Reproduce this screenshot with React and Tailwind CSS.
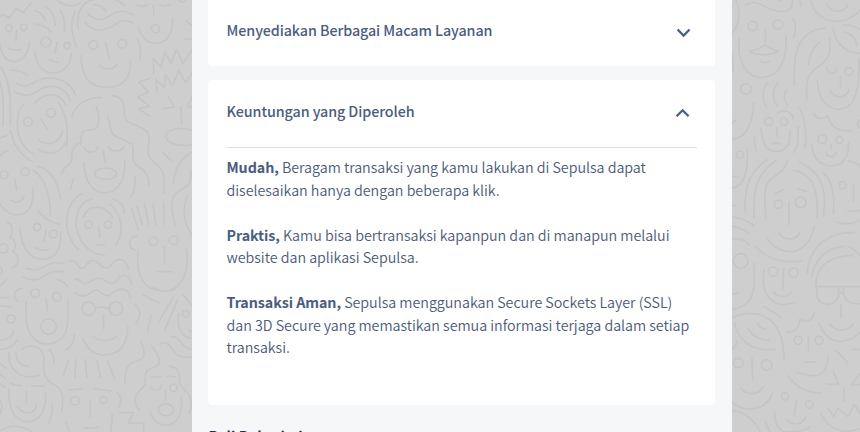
const leftTop = [
  'M0 50L8 43L28 54L48 25L70 38L93 8', 'M50 90L48 122', 'M0 135C6 165 20 185 42 185C68 184 86 160 88 128', 'M25 145Q42 152 61 149',
  'M103 32Q130 38 135 62', 'M137 20Q165 38 166 77', 'M103 73Q135 72 152 95', 'M180 30Q197 52 193 93', 'M171 126L166 157', 'M149 178Q160 187 175 187',
  'M105 158C107 198 132 220 163 219C193 218 214 190 214 160', 'M168 -4C185 18 220 24 240 8', 'M234 85C228 40 245 5 280 0', 'M225 36C208 65 216 115 232 143',
  'M280 14Q307 15 318 34', 'M340 -4Q362 5 374 18', 'M263 39C280 60 305 65 325 50S365 25 402 45', 'M255 67C272 90 295 96 325 85S360 48 400 70',
  'M317 129L328 176', 'M297 195C310 210 342 212 353 191', 'M243 167C244 230 270 262 320 262C370 262 392 235 391 185', 'M411 16Q427 24 441 15', 'M479 14Q492 21 509 14',
  'M460 17L462 48', 'M415 83C427 120 450 130 470 130C500 129 520 100 518 54', 'M412 116Q426 145 419 177', 'M559 62Q566 75 580 77', 'M555 116L578 118',
  'M461 220L460 176L483 201L494 156L513 191L530 148L549 190L576 150', 'M471 278L468 238L493 264L496 225L518 257L536 212L556 248L576 220',
  'M450 235L416 246L445 276L413 291L449 319L415 326L450 350', 'M490 326L523 321L504 290', 'M542 320L545 372', 'M576 290L563 320L580 321',
  'M32 210Q60 209 84 226', 'M50 249C65 263 80 261 100 249C145 222 205 230 228 287', 'M43 274C63 288 90 290 110 274C145 250 195 252 211 303', 'M105 308C137 276 174 274 197 314',
  'M-4 195C30 230 34 300 31 374', 'M-4 235C12 270 12 320 9 377', 'M-4 415L20 407', 'M32 393L43 432', 'M73 313C45 330 45 400 70 436', 'M175 306C200 345 206 390 200 436',
  'M123 358L142 387', 'M117 421C144 440 181 428 187 393', 'M215 351C225 315 260 291 304 293', 'M288 320C302 350 299 381 280 389C260 392 246 386 244 410L242 435',
  'M323 349C333 370 326 390 340 404C355 417 375 417 394 433', 'M336 287C365 288 376 310 373 345C373 373 405 368 437 391Q450 400 447 435', 'M497 410C500 380 570 380 580 397M497 410C505 432 530 434 545 435',
];
const leftMid = [
  'M0 36Q10 24 24 20', 'M43 -4Q66 39 98 54', 'M67 -2Q84 25 103 30', 'M117 17C145 34 180 30 196 -3', 'M45 107L50 138', 'M35 169C47 180 65 174 72 157', 'M-4 177C18 207 42 215 60 212C88 208 102 180 98 135',
  'M98 77C140 108 150 155 151 216', 'M115 67C150 75 175 115 181 163', 'M114 200Q141 235 179 240', 'M139 257L130 294', 'M103 311Q122 319 143 319', 'M60 253C64 320 95 346 130 345C165 344 184 320 182 264',
  'M21 235C43 240 38 270 30 281C50 288 50 312 39 323C59 334 59 364 35 372', 'M79 373C105 382 119 378 135 367C155 354 165 356 191 358', 'M69 399C100 414 117 407 133 396S160 380 191 383', 'M172 407Q190 411 204 428',
  'M221 102L211 137', 'M237 -3Q218 10 215 28C216 48 218 55 201 65Q188 73 186 90', 'M251 10C260 29 288 31 293 7', 'M324 9C335 25 364 24 372 9', 'M310 20L315 53', 'M252 57C254 110 275 147 315 147C353 146 377 110 374 48',
  'M396 -3C403 15 395 32 400 47C407 75 430 65 441 95Q448 108 447 125', 'M404 98Q410 131 394 157', 'M444 -3L445 32C451 52 480 65 489 87Q493 97 491 147', 'M488 25L514 50', 'M521 118C522 70 548 38 580 22', 'M510 -4Q540 9 577 2',
  'M245 149C198 172 178 257 235 317', 'M277 165C225 175 222 245 235 270C248 309 278 330 313 334', 'M249 222C265 175 320 182 338 221', 'M331 180C364 214 377 263 346 305', 'M340 165Q371 174 374 208', 'M296 249L300 282', 'M292 303L314 304',
  'M210 352C233 343 229 370 244 373C261 374 260 347 278 349C299 350 301 374 319 372C340 372 333 346 360 346Q377 347 386 373', 'M224 406C243 401 237 418 256 418C274 414 280 402 297 403C318 404 319 420 340 418C358 412 351 394 372 394Q393 396 395 422',
  'M394 193L415 257', 'M410 186L427 242', 'M434 180L446 242', 'M459 183L468 242', 'M491 178L492 241', 'M412 276C382 276 382 316 406 318', 'M493 307L494 360', 'M474 383L516 383', 'M414 322C406 390 430 432 470 438', 'M560 317C566 375 557 421 510 439',
  'M526 242C510 185 511 160 534 142C555 131 577 125 572 82', 'M562 155C545 200 549 238 580 279', 'M-4 430L20 407',
];
const leftLow = [
  'M0 30L25 28', 'M0 53L33 57', 'M0 156Q37 157 39 129', 'M-4 184Q36 185 51 157', 'M66 2C37 5 38 35 55 39', 'M138 33L143 68', 'M79 41C72 110 85 167 145 168C196 163 209 130 203 39', 'M224 140Q219 177 196 187',
  'M224 15C248 31 260 24 276 10C305 -5 295 27 328 22C347 7 357 0 373 5Q388 9 391 29', 'M286 61Q307 53 328 62', 'M311 81L311 122', 'M279 146C302 163 330 160 349 146', 'M248 151C264 190 287 201 314 201C354 201 382 176 384 115', 'M405 48Q432 77 408 105',
  'M429 20L477 46', 'M453 82L442 130', 'M520 28L475 103', 'M532 37L494 127', 'M549 20L580 57', 'M456 -2Q490 18 525 3', 'M536 77C530 125 547 150 580 151', 'M566 128L580 129', 'M515 147C544 143 540 184 580 184', 'M479 168C498 158 509 170 520 187C536 211 548 207 580 208',
  'M206 216L190 263', 'M228 215L225 267', 'M256 214L261 268', 'M291 219L302 270', 'M322 220L344 272', 'M148 185Q164 203 162 226', 'M65 184C92 163 132 176 132 214C127 258 137 278 164 291Q197 304 185 370', 'M27 193C22 245 65 279 116 262', 'M48 193Q47 231 85 235',
  'M0 226L18 241', 'M0 259L16 271', 'M0 288L15 297', 'M30 286Q47 294 64 293', 'M96 294L134 294', 'M79 310L79 341', 'M52 356C71 384 109 378 109 349', 'M26 303C25 365 45 401 82 401C122 400 139 365 136 317', 'M157 348Q158 386 145 405', 'M-3 330Q12 349 0 380', 'M-4 430Q43 400 94 430',
  'M207 306L246 302', 'M282 302L333 309', 'M270 338L271 387', 'M252 419Q274 423 294 417', 'M198 402L210 435', 'M336 378Q337 415 330 435', 'M352 315Q370 329 356 357', 'M358 374L400 374L386 405L431 405L430 435',
  'M423 161Q441 201 424 214C396 224 374 222 375 284', 'M455 175C476 200 489 229 464 237C429 248 437 261 436 282C437 301 411 306 404 331Q405 355 418 365', 'M507 235C533 234 539 253 539 282C541 310 590 310 568 376', 'M453 267L482 266', 'M502 265L527 267', 'M453 299C462 311 482 309 483 292', 'M496 303L497 337', 'M451 373C460 401 478 412 499 412C530 409 548 381 544 326',
];
const leftCircles = [
  [27,85,10],[71,82,10],[138,126,15],[201,137,9],[280,135,13],[367,131,13],[467,86,12],[84,365,13],[153,339,13],[547,-4,10],
  [12,525,12],[75,515,12],[112,681,11],[160,702,12],[266,674,11],[324,674,11],[460,724,13],[521,721,13],[10,745,14],[-6,812,12],
  [106,880,13],[170,890,13],[33,957,12],[146,980,23],[266,926,20],[348,926,20],[557,941,10],[225,1202,13],[310,1200,10],[521,1163,11],
];
const rightTop = [
  'M31 -3C48 30 46 70 22 98', 'M62 15C90 -2 107 15 133 26C176 42 205 38 202 -3', 'M160 0L168 4', 'M225 -3L227 17', 'M120 86L122 124', 'M73 154C93 150 110 143 120 134C133 146 147 150 159 154C137 168 90 166 73 154Z', 'M108 184Q120 192 132 184', 'M42 115C36 190 67 232 110 233C161 230 187 185 183 107', 'M203 55Q219 81 206 111',
  'M255 -3C267 45 302 64 334 64C365 64 393 46 409 25', 'M306 13C320 42 358 38 369 13', 'M302 84C220 91 204 154 208 254', 'M282 128Q252 152 251 193', 'M314 115C317 158 316 174 284 198C257 213 238 232 246 298', 'M324 84C333 139 370 160 409 160', 'M354 75Q389 74 409 92', 'M358 96Q389 103 396 135',
  'M305 205C312 224 329 226 334 205', 'M346 230L347 262', 'M315 270C326 297 364 297 372 270', 'M277 243C280 302 310 326 341 328C379 327 405 297 402 177', 'M21 158L25 214', 'M129 247C108 270 112 304 125 320', 'M158 249C138 272 144 304 158 318', 'M186 270Q169 292 187 314',
  'M86 309C83 375 61 417 20 417', 'M21 370L33 360', 'M157 341C170 326 200 332 205 356', 'M156 382L156 408', 'M108 386Q111 415 120 434', 'M220 379L219 433', 'M195 394L192 434', 'M222 325Q244 352 242 436', 'M267 342C278 362 300 357 308 346C317 385 346 397 378 392', 'M142 432Q153 425 165 432', 'M88 407L89 435',
];
const rightMid = [
  'M67 17C70 92 53 129 20 132', 'M20 98L38 98', 'M89 -4L94 20', 'M116 -2C130 29 176 32 192 -4', 'M217 -3Q217 13 206 25', 'M241 -4L238 10', 'M302 25C308 43 329 43 334 25', 'M319 0L319 14', 'M260 4C265 50 295 67 322 66C351 64 374 39 370 -4',
  'M127 47C73 84 59 126 60 200', 'M154 49C99 84 83 131 87 221', 'M187 50C176 107 119 80 119 160L122 223', 'M223 54C276 78 310 119 295 216', 'M205 79C265 88 281 137 276 223', 'M295 87C318 106 330 145 325 209', 'M150 149L174 137', 'M219 135L245 142', 'M192 174L192 242', 'M161 265C173 290 213 293 224 265', 'M125 280C161 341 250 343 268 247',
  'M370 50Q393 55 409 69', 'M385 123L385 172', 'M368 200Q384 205 409 198', 'M336 234Q373 248 409 226', 'M21 184L30 185', 'M20 219Q60 223 88 246', 'M20 246Q52 251 70 267', 'M20 285Q58 281 72 302', 'M92 308C125 343 167 360 229 351',
  'M247 386C256 303 311 263 388 266', 'M260 397C270 340 314 309 357 307', 'M273 430C271 374 304 337 382 334', 'M373 308Q394 318 409 339', 'M88 357L87 435', 'M117 378Q112 409 118 435', 'M176 374L174 435', 'M274 428L405 428',
];
const rightLow = [
  'M20 64C61 61 84 33 86 -3', 'M20 20L39 14', 'M117 -4C127 44 162 59 210 43', 'M147 13C158 29 190 31 201 11', 'M117 55L169 88', 'M20 89C80 63 176 66 177 214', 'M28 106C44 165 84 191 149 184', 'M69 123Q93 158 135 157', 'M97 106Q107 125 124 123', 'M37 159Q33 176 20 185',
  'M275 -3L275 17C278 60 340 60 341 16V-3', 'M341 14H355', 'M355 -3V14C359 40 379 49 409 47', 'M348 51V90', 'M314 107C330 132 370 132 384 108', 'M283 107C297 143 320 160 348 160Q385 157 409 129', 'M185 132C213 132 224 119 225 93C247 105 266 96 268 71',
  'M250 144V187', 'M239 222H273', 'M218 253C274 274 307 265 309 208', 'M333 187L369 225', 'M382 185L409 184', 'M306 288L340 290L326 253', 'M409 253L379 290H409', 'M357 300V340', 'M187 263C216 298 244 316 287 314',
  'M81 212L83 273', 'M47 301C65 323 100 323 114 297', 'M20 344C75 382 125 359 143 316', 'M214 338L208 382', 'M184 394C202 415 232 412 243 386', 'M148 373C150 410 164 432 190 432Q233 432 256 417', 'M20 367C59 370 89 399 108 435', 'M121 401L136 435', 'M308 361L327 386L338 361L369 386L388 350L409 381', 'M287 377C315 430 360 440 409 420',
];
const rightCircles = [
  [83,78,14],[159,74,14],[372,215,12],[63,267,16],[131,365,12],[177,365,11],[292,417,13],[343,420,10],[412,372,14],
  [45,464,11],[160,613,12],[227,607,16],[353,556,11],[47,783,22],[144,815,14],[206,818,14],
  [40,1089,14],[125,1095,16],[219,1021,12],[282,1021,12],[180,1189,11],[253,1214,11],
];

function Strokes({ paths, y = 0 }) {
  return <g transform={`translate(0 ${y})`}>{paths.map((d) => <path key={d} d={d} />)}</g>;
}

function Doodles({ viewBox, width, groups, circles, ellipses = [] }) {
  return (
    <svg width={width} height="432" viewBox={viewBox} fill="none" stroke="#c5c5c5" strokeWidth="5" strokeLinecap="round" strokeLinejoin="round" aria-hidden="true" className="block shrink-0">
      {groups.map((paths, i) => <Strokes key={i} paths={paths} y={i * 432} />)}
      {circles.map(([x, y, r]) => <circle key={`${x}-${y}`} cx={x} cy={y} r={r} />)}
      {ellipses.map(([x, y, rx, ry]) => <ellipse key={`${x}-${y}`} cx={x} cy={y} rx={rx} ry={ry} />)}
    </svg>
  );
}

function Chevron({ up = false }) {
  return (
    <svg width="14" height="10" viewBox="0 0 14 10" fill="none" stroke="#4a5f88" strokeWidth="2.3" className="shrink-0">
      <path d={up ? 'M0.6 8.3L6.6 2.3L12.6 8.3' : 'M0.6 1.5L6.6 7.5L12.6 1.5'} />
    </svg>
  );
}

export default function App() {
  return (
    <div className="flex h-[432px] w-[860px] overflow-hidden bg-[#cecece] font-['Noto_Sans_CJK_SC',sans-serif] text-[#4d5b78]">
      <Doodles width="192" viewBox="0 0 576 1296" groups={[leftTop, leftMid, leftLow]} circles={leftCircles} ellipses={[[317, 521, 33, 17], [498, 1229, 23, 18]]} />
      <main className="h-[432px] w-[540px] shrink-0 overflow-hidden bg-[#f5f7f9] pr-[17px] pl-4">
        <section className="flex h-[66px] items-start justify-between rounded-b-[4px] bg-white pt-[19px] pr-[24px] pl-[18.5px]">
          <h2 className="text-[14.3px] leading-[22px] font-medium tracking-[-0.08px] text-[#4a5d80]">Menyediakan Berbagai Macam Layanan</h2>
          <div className="pt-[9px]"><Chevron /></div>
        </section>
        <section className="mt-3.5 h-[325px] rounded-[4px] bg-white pr-[18px] pl-[18.5px]">
          <header className="flex h-[68px] items-start justify-between border-b border-[#dcdddf] pt-5 pr-[7px]">
            <h2 className="text-[14.3px] leading-[22px] font-medium tracking-[-0.08px] text-[#4a5d80]">Keuntungan yang Diperoleh</h2>
            <div className="pt-2"><Chevron up /></div>
          </header>
          <div className="flex flex-col gap-[22.5px] pt-2 text-[14.3px] leading-[22.5px] font-[350] tracking-[-0.035px] whitespace-nowrap">
            <p><b className="font-bold tracking-[-0.08px] text-[#4a5d80]">Mudah,</b> Beragam transaksi yang kamu lakukan di Sepulsa dapat<br />diselesaikan hanya dengan beberapa klik.</p>
            <p><b className="font-bold tracking-[-0.08px] text-[#4a5d80]">Praktis,</b> Kamu bisa bertransaksi kapanpun dan di manapun melalui<br />website dan aplikasi Sepulsa.</p>
            <p><b className="font-bold tracking-[-0.08px] text-[#4a5d80]">Transaksi Aman,</b> Sepulsa menggunakan Secure Sockets Layer (SSL)<br />dan 3D Secure yang memastikan semua informasi terjaga dalam setiap<br />transaksi.</p>
          </div>
        </section>
        <h2 className="mt-[19px] pl-[0.5px] text-[14.3px] leading-6 font-bold whitespace-nowrap text-[#20304c]">Beli Pulsa hai</h2>
      </main>
      <Doodles width="128" viewBox="21 0 384 1296" groups={[rightTop, rightMid, rightLow]} circles={rightCircles} />
    </div>
  );
}
